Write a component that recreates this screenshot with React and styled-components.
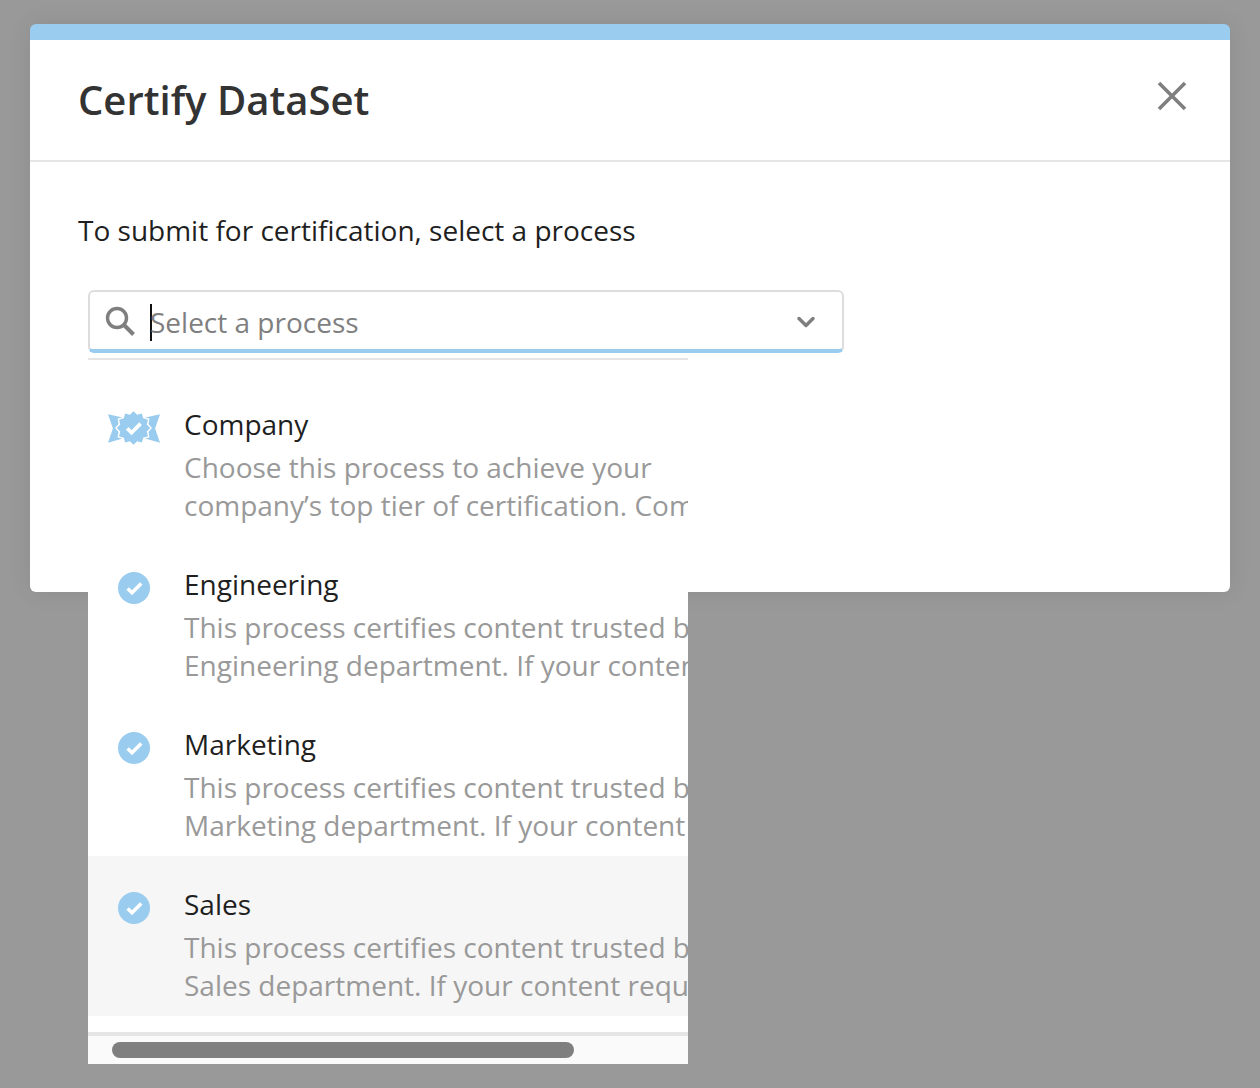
import React from "react";
import styled, { createGlobalStyle } from "styled-components";
import { ChevronDown } from "lucide-react";

const processes = [
  {
    name: "Company",
    icon: "company",
    lines: ["Choose this process to achieve your", "company’s top tier of certification. Company content"],
  },
  {
    name: "Engineering",
    lines: ["This process certifies content trusted by the", "Engineering department. If your content requires"],
  },
  {
    name: "Marketing",
    lines: ["This process certifies content trusted by the", "Marketing department. If your content requires"],
  },
  {
    name: "Sales",
    active: true,
    lines: ["This process certifies content trusted by the", "Sales department. If your content requires"],
  },
];

function CheckBadge() {
  return (
    <svg width="32" height="32" viewBox="0 0 32 32">
      <circle cx="16" cy="16" r="16" fill="#99ccee" />
      <path d="M9.6 16.4l4.4 4.4 9.2-9.2" fill="none" stroke="#fff" strokeWidth="3.6" />
    </svg>
  );
}

function starPoints(outer, inner) {
  const points = [];
  for (let i = 0; i < 24; i++) {
    const r = i % 2 ? inner : outer;
    const a = (i * Math.PI) / 12;
    points.push(`${(26 + r * Math.sin(a)).toFixed(2)},${(17 - r * Math.cos(a)).toFixed(2)}`);
  }
  return points.join(" ");
}

function CompanyBadge() {
  return (
    <svg width="53" height="34" viewBox="0 0 53 34">
      <path d="M0 3L16 6.5V27.5L0 32 5 17.5z" fill="#99ccee" />
      <path d="M53 3L37 6.5V27.5L53 32 48 17.5z" fill="#99ccee" />
      <polygon points={starPoints(18.8, 15.8)} fill="#fff" />
      <polygon points={starPoints(17, 14)} fill="#99ccee" />
      <path d="M19.6 17.4l4.4 4.4 9.2-9.2" fill="none" stroke="#fff" strokeWidth="3.8" />
    </svg>
  );
}

function SearchGlyph() {
  return (
    <svg width="30" height="30" viewBox="0 0 30 30">
      <circle cx="12" cy="12" r="9.5" fill="none" stroke="#7f7f7f" strokeWidth="3.4" />
      <path d="M18.5 18.5L28.5 28.5" fill="none" stroke="#7f7f7f" strokeWidth="4" />
    </svg>
  );
}

function CloseGlyph() {
  return (
    <svg width="30" height="30" viewBox="0 0 30 30">
      <path d="M2 2L28 28M28 2L2 28" fill="none" stroke="#7f7f7f" strokeWidth="3.6" />
    </svg>
  );
}

export default function App() {
  return (
    <>
      <GlobalStyle />
      <Backdrop>
        <Modal>
          <Header>
            <Title>Certify DataSet</Title>
            <CloseButton>
              <CloseGlyph />
            </CloseButton>
          </Header>
          <Body>
            <Prompt>To submit for certification, select a process</Prompt>
            <SelectWrap>
              <Field>
                <SearchIcon>
                  <SearchGlyph />
                </SearchIcon>
                <Caret />
                <Placeholder>Select a process</Placeholder>
                <Chevron>
                  <ChevronDown size={28} strokeWidth={3} />
                </Chevron>
              </Field>
              <Menu>
                {processes.map((p) => (
                  <Item key={p.name} $active={p.active}>
                    <ItemIcon $company={p.icon === "company"}>
                      {p.icon === "company" ? <CompanyBadge /> : <CheckBadge />}
                    </ItemIcon>
                    <ItemText>
                      <ItemName>{p.name}</ItemName>
                      {p.lines.map((line) => (
                        <ItemLine key={line}>{line}</ItemLine>
                      ))}
                    </ItemText>
                  </Item>
                ))}
                <ScrollTrack>
                  <ScrollThumb />
                </ScrollTrack>
              </Menu>
            </SelectWrap>
          </Body>
        </Modal>
      </Backdrop>
    </>
  );
}

const GlobalStyle = createGlobalStyle`
  html, body {
    margin: 0;
    padding: 0;
  }
  body {
    font-family: "Open Sans", "Noto Sans", sans-serif;
    background: #999999;
  }
`;

const Backdrop = styled.div`
  width: 1260px;
  height: 1088px;
  padding: 24px 30px 0;
  box-sizing: border-box;
  background: #999999;
  overflow: hidden;
`;

const Modal = styled.div`
  width: 1200px;
  height: 568px;
  background: #fff;
  border-top: 16px solid #99ccee;
  border-radius: 6px;
  box-sizing: border-box;
  box-shadow: 0 0 24px rgba(0, 0, 0, 0.08);
`;

const Header = styled.div`
  height: 120px;
  display: flex;
  align-items: center;
  justify-content: space-between;
  padding: 0 43px 0 48px;
  border-bottom: 2px solid #e5e5e5;
`;

const Title = styled.h1`
  margin: 0 0 1px;
  font-size: 40px;
  font-weight: 600;
  color: #333333;
`;

const CloseButton = styled.div`
  display: flex;
  margin: 0 0 8px;
`;

const Body = styled.div`
  padding: 49px 48px 0;
`;

const Prompt = styled.p`
  margin: 0;
  font-size: 28px;
  line-height: 38px;
  color: #1f1f1f;
`;

const SelectWrap = styled.div`
  position: relative;
  margin: 41px 0 0 10px;
  width: 756px;
`;

const Field = styled.div`
  height: 63px;
  box-sizing: border-box;
  display: flex;
  align-items: center;
  padding: 2px 22px 0 15px;
  background: #fff;
  border: 2px solid #dddddd;
  border-bottom: 4px solid #99ccee;
  border-radius: 6px;
`;

const SearchIcon = styled.div`
  display: flex;
  margin: 0 15px 1px 0;
`;

const Caret = styled.span`
  width: 2px;
  height: 37px;
  margin-top: 2px;
  background: #111;
`;

const Placeholder = styled.span`
  flex: 1;
  font-size: 28px;
  color: #7f7f7f;
  margin: 0 0 0 -2px;
`;

const Chevron = styled.div`
  display: flex;
  color: #7f7f7f;
`;

const Menu = styled.div`
  position: absolute;
  top: 68px;
  left: 0;
  width: 600px;
  height: 706px;
  box-sizing: border-box;
  padding-top: 16px;
  background: #fff;
  border-top: 2px solid #e5e5e5;
  overflow: hidden;
`;

const Item = styled.div`
  height: 160px;
  display: flex;
  padding: 0 0 0 20px;
  box-sizing: border-box;
  background: ${(p) => (p.$active ? "#f6f6f6" : "#fff")};
`;

const ItemIcon = styled.div`
  width: 76px;
  flex: none;
  display: flex;
  justify-content: center;
  align-items: flex-start;
  padding: ${(p) => (p.$company ? "35px" : "36px")} 24px 0 0;
  box-sizing: border-box;
`;

const ItemText = styled.div`
  padding-top: 29px;
  white-space: nowrap;
`;

const ItemName = styled.div`
  font-size: 28px;
  line-height: 38px;
  color: #1f1f1f;
  margin-bottom: 5px;
`;

const ItemLine = styled.div`
  font-size: 28px;
  line-height: 38px;
  color: #999999;
`;

const ScrollTrack = styled.div`
  margin-top: 16px;
  height: 32px;
  box-sizing: border-box;
  padding: 6px 0 0 24px;
  background: #fafafa;
  border-top: 4px solid #e5e5e5;
`;

const ScrollThumb = styled.div`
  width: 462px;
  height: 16px;
  border-radius: 8px;
  background: #7f7f7f;
`;
